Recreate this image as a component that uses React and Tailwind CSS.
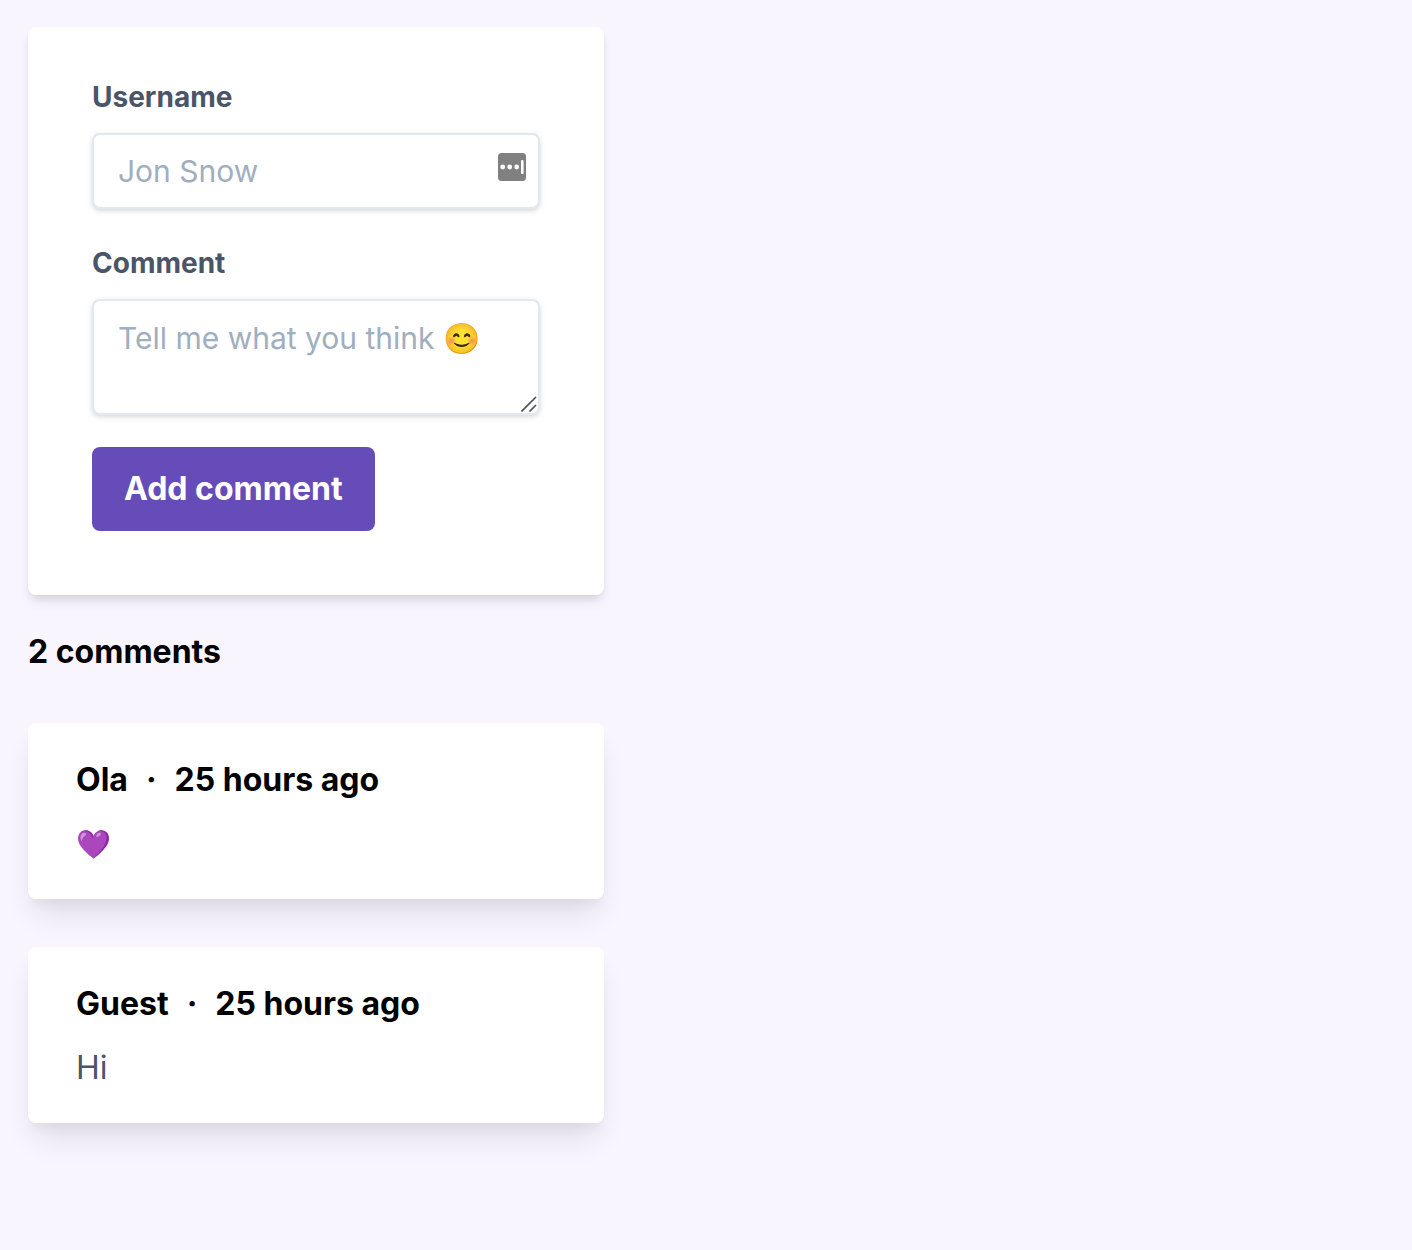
const comments = [
  { author: "Ola", time: "25 hours ago", text: "💜", reaction: true },
  { author: "Guest", time: "25 hours ago", text: "Hi" },
];

export default function App() {
  return (
    <main className="min-h-screen bg-[#f8f5ff] px-7 pt-[27px] pb-12 font-['Inter',sans-serif] text-[32px] leading-[50px] text-black">
      <form
        onSubmit={(e) => e.preventDefault()}
        className="w-full max-w-[576px] rounded-lg bg-white px-16 pt-12 pb-16 shadow-[0_8px_12px_-2px_rgba(0,0,0,0.1),0_4px_8px_-2px_rgba(0,0,0,0.06)]"
      >
        <label htmlFor="username" className="mb-3.5 block text-[28px] leading-[44px] font-bold text-[#4a5568]">
          Username
        </label>
        <div className="relative mb-8">
          <input
            id="username"
            type="text"
            placeholder="Jon Snow"
            className="block h-[76px] w-full rounded-lg border-2 border-[#e2e8f0] bg-white px-6 text-[30px] shadow-[0_2px_6px_rgba(0,0,0,0.1),0_2px_4px_rgba(0,0,0,0.06)] outline-none placeholder:text-[#a0aec0]"
          />
          <svg aria-hidden="true" viewBox="0 0 28 28" className="absolute top-5 right-3.5 size-7">
            <rect width="28" height="28" rx="3.5" fill="#808080" />
            <circle cx="4.7" cy="14" r="2.4" fill="#fff" />
            <circle cx="11.7" cy="14" r="2.4" fill="#fff" />
            <circle cx="18.7" cy="14" r="2.4" fill="#fff" />
            <rect x="23" y="7" width="2.6" height="14" rx="1" fill="#fff" />
          </svg>
        </div>
        <label htmlFor="comment" className="mb-3.5 block text-[28px] leading-[44px] font-bold text-[#4a5568]">
          Comment
        </label>
        <div className="relative mb-8">
          <textarea
            id="comment"
            placeholder="Tell me what you think 😊"
            className="block h-[116px] w-full resize-y rounded-lg border-2 border-[#e2e8f0] bg-white px-6 py-3 text-[30px] shadow-[0_2px_6px_rgba(0,0,0,0.1),0_2px_4px_rgba(0,0,0,0.06)] outline-none placeholder:text-[#a0aec0] [&::-webkit-resizer]:bg-transparent"
          />
          <svg
            aria-hidden="true"
            viewBox="0 0 16 16"
            className="pointer-events-none absolute right-[3px] bottom-[3px] size-4"
            stroke="#4d4d4d"
            strokeWidth="1.6"
            fill="none"
          >
            <path d="M0.5 15.5 15 1M8.5 15.5 15 9" />
          </svg>
        </div>
        <button type="submit" className="rounded-lg bg-[#664cb8] px-8 py-[17px] font-bold text-white">
          Add comment
        </button>
      </form>
      <h2 className="mt-8 mb-[46px] font-bold">2 comments</h2>
      {comments.map((c) => (
        <article
          key={c.author}
          className="mb-12 w-full max-w-[576px] rounded-lg bg-white px-12 pt-8 pb-[30px] shadow-[0_20px_30px_-6px_rgba(0,0,0,0.1),0_8px_12px_-4px_rgba(0,0,0,0.05)]"
        >
          <h3 className="mb-3.5 flex gap-[18px] font-bold">
            <span>{c.author}</span>
            <span>·</span>
            <span>{c.time}</span>
          </h3>
          <p className={c.reaction ? "text-[28px] text-[#4a5568]" : "text-[#4a5568]"}>{c.text}</p>
        </article>
      ))}
    </main>
  );
}
